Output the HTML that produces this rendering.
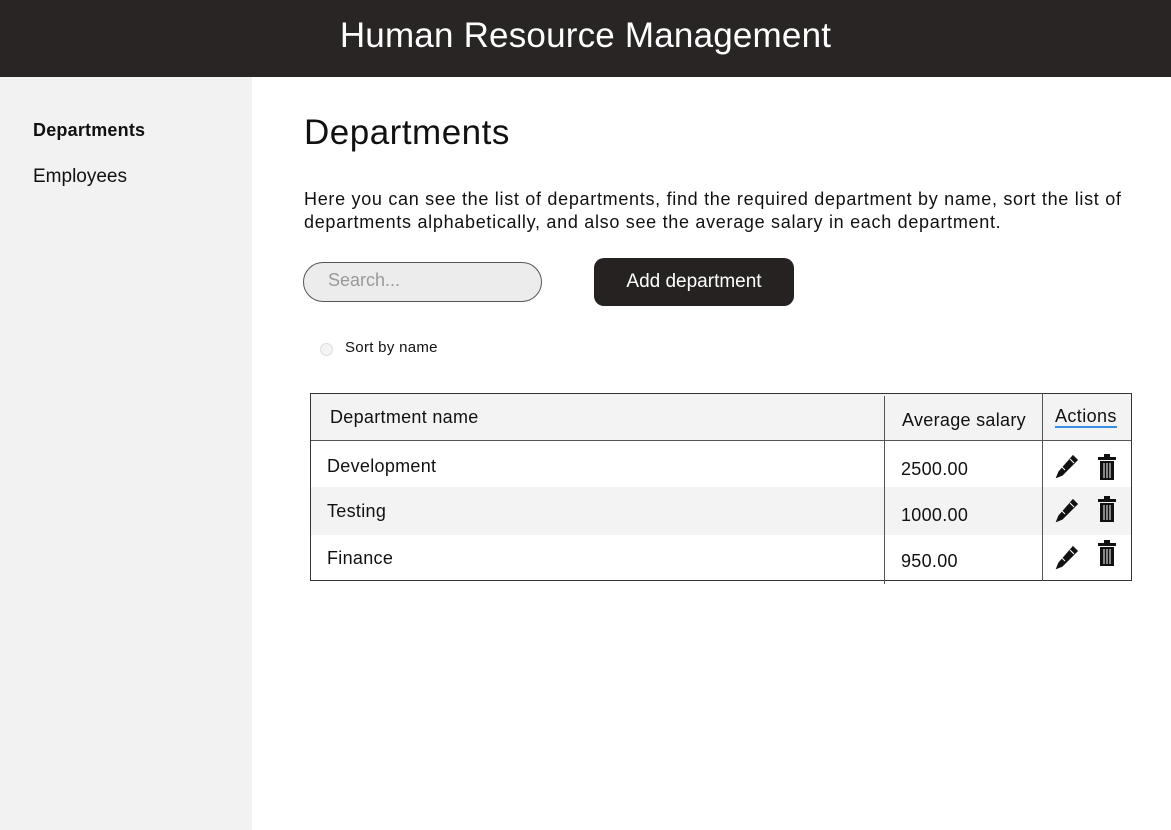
<!DOCTYPE html>
<html><head><style>
*{margin:0;padding:0;box-sizing:border-box}
body{width:1171px;height:830px;position:relative;background:#fff;font-family:"Liberation Sans",sans-serif;color:#111;overflow:hidden}
.a{position:absolute;white-space:nowrap}
.pen,.trash{position:absolute}
</style></head><body>
<div class="a" style="left:0;top:0;width:1171px;height:77px;background:#292524"></div>
<div class="a" style="left:0;top:16px;width:1171px;text-align:center;color:#fff;font-size:35px;letter-spacing:0.2px">Human Resource Management</div>
<div class="a" style="left:0;top:77px;width:252px;height:753px;background:#f2f2f2"></div>
<div class="a" style="left:33px;top:120px;font-size:18px;font-weight:bold;letter-spacing:0.2px">Departments</div>
<div class="a" style="left:33px;top:166px;font-size:19px">Employees</div>
<div class="a" style="left:304px;top:113px;font-size:35px;letter-spacing:0.5px">Departments</div>
<div class="a" style="left:304px;top:188px;font-size:18px;line-height:23px;letter-spacing:0.7px">Here you can see the list of departments, find the required department by name, sort the list of<br>departments alphabetically, and also see the average salary in each department.</div>
<div class="a" style="left:303px;top:262px;width:239px;height:40px;border:1.5px solid #555;border-radius:20px;background:#ececec"></div>
<div class="a" style="left:328px;top:270px;font-size:18px;color:#999">Search...</div>
<div class="a" style="left:594px;top:258px;width:200px;height:48px;border-radius:10px;background:#262222;color:#fff;font-size:19px;text-align:center;line-height:48px">Add department</div>
<div class="a" style="left:320px;top:343px;width:13px;height:13px;border-radius:50%;border:1px solid #ddd;background:#f4f4f4"></div>
<div class="a" style="left:345px;top:339px;font-size:15px;letter-spacing:0.3px">Sort by name</div>
<div class="a" style="left:310px;top:393px;width:822px;height:188px;border:1.5px solid #333"></div>
<div class="a" style="left:311px;top:394px;width:820px;height:47px;background:#f3f3f3;border-bottom:1px solid #555"></div>
<div class="a" style="left:311px;top:487px;width:820px;height:48px;background:#f3f3f3"></div>
<div class="a" style="left:884px;top:396px;width:1px;height:188px;background:#555"></div>
<div class="a" style="left:1042px;top:393px;width:1px;height:188px;background:#555"></div>
<div class="a" style="left:330px;top:407px;font-size:18px;letter-spacing:0.3px">Department name</div>
<div class="a" style="left:902px;top:410px;font-size:18px;letter-spacing:0.3px">Average salary</div>
<div class="a" style="left:1055px;top:407px;font-size:18px;border-bottom:2px solid #3a8ee6;line-height:18px;padding-bottom:1px;letter-spacing:0.4px">Actions</div>
<div class="a" style="left:327px;top:456px;font-size:18px;letter-spacing:0.3px">Development</div>
<div class="a" style="left:327px;top:501px;font-size:18px;letter-spacing:0.3px">Testing</div>
<div class="a" style="left:327px;top:548px;font-size:18px;letter-spacing:0.3px">Finance</div>
<div class="a" style="left:901px;top:459px;font-size:18px;letter-spacing:0.3px">2500.00</div>
<div class="a" style="left:901px;top:505px;font-size:18px;letter-spacing:0.3px">1000.00</div>
<div class="a" style="left:901px;top:551px;font-size:18px;letter-spacing:0.3px">950.00</div>
<svg class="pen" style="left:1055px;top:454px" width="24" height="26" viewBox="0 0 24 26"><path d="M18 2l4 4L7 21l-5 2 2-5z" fill="#111" stroke="#111" stroke-width="1.5"/><path d="M15 5l4 4M7 13l3 3" stroke="#fff" stroke-width="1"/></svg>
<svg class="pen" style="left:1055px;top:498px" width="24" height="26" viewBox="0 0 24 26"><path d="M18 2l4 4L7 21l-5 2 2-5z" fill="#111" stroke="#111" stroke-width="1.5"/><path d="M15 5l4 4M7 13l3 3" stroke="#fff" stroke-width="1"/></svg>
<svg class="pen" style="left:1055px;top:545px" width="24" height="26" viewBox="0 0 24 26"><path d="M18 2l4 4L7 21l-5 2 2-5z" fill="#111" stroke="#111" stroke-width="1.5"/><path d="M15 5l4 4M7 13l3 3" stroke="#fff" stroke-width="1"/></svg>
<svg class="trash" style="left:1097px;top:454px" width="20" height="27" viewBox="0 0 20 27"><rect x="7" y="0" width="6" height="3" fill="#111"/><rect x="1" y="3" width="18" height="3" fill="#111"/><path d="M3 7h14v19H3z" fill="#111"/><path d="M7 9v15M10 9v15M13 9v15" stroke="#fff" stroke-width="1"/></svg>
<svg class="trash" style="left:1097px;top:496px" width="20" height="27" viewBox="0 0 20 27"><rect x="7" y="0" width="6" height="3" fill="#111"/><rect x="1" y="3" width="18" height="3" fill="#111"/><path d="M3 7h14v19H3z" fill="#111"/><path d="M7 9v15M10 9v15M13 9v15" stroke="#fff" stroke-width="1"/></svg>
<svg class="trash" style="left:1097px;top:540px" width="20" height="27" viewBox="0 0 20 27"><rect x="7" y="0" width="6" height="3" fill="#111"/><rect x="1" y="3" width="18" height="3" fill="#111"/><path d="M3 7h14v19H3z" fill="#111"/><path d="M7 9v15M10 9v15M13 9v15" stroke="#fff" stroke-width="1"/></svg>
</body></html>
